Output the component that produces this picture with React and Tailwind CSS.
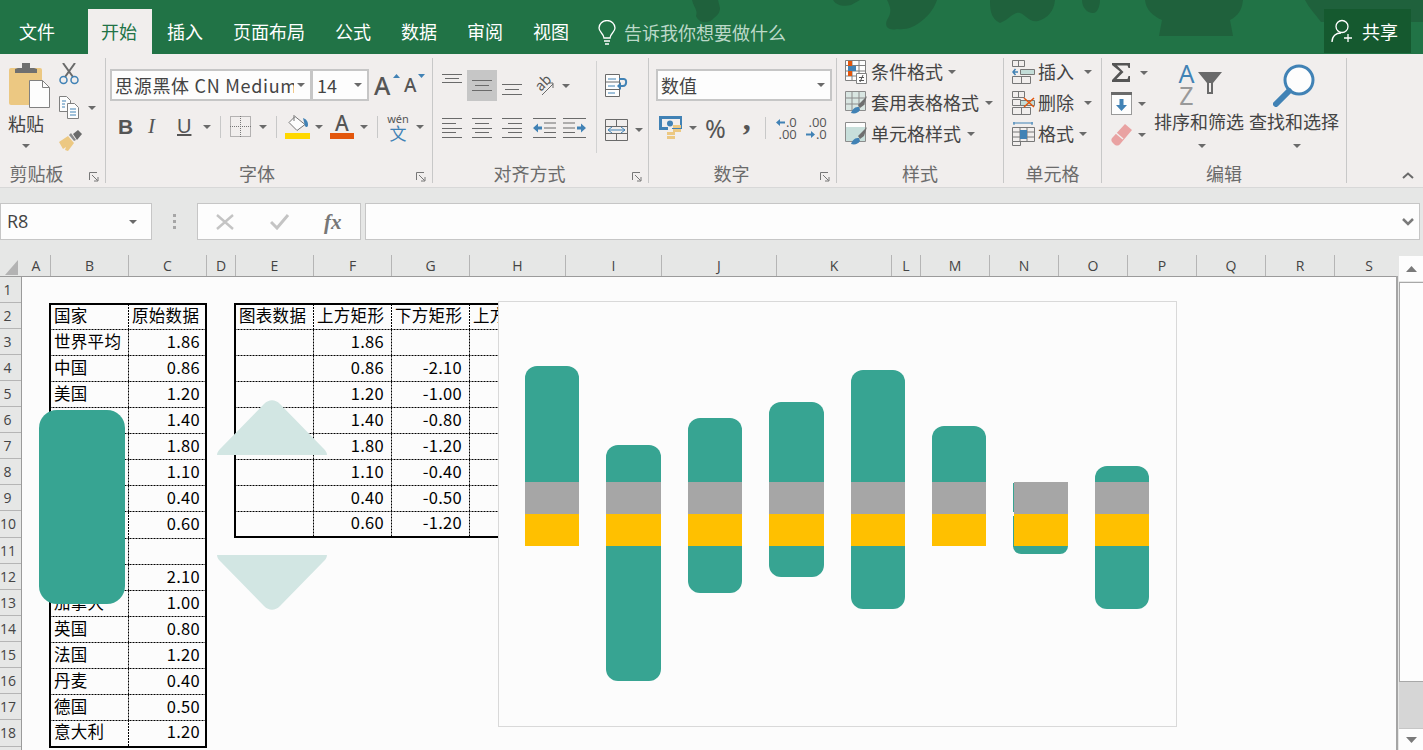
const ICON = '#6a6a6a';
const BLUE = '#4182b5';
const ORANGE = '#e3560c';
const TAN = '#ecc882';

function Caret({ className = '' }) {
  return (
    <svg className={`shrink-0 ${className}`} width="8" height="4" viewBox="0 0 8 4">
      <path d="M0 0h8L4 4z" fill={ICON} />
    </svg>
  );
}

function Launcher() {
  return (
    <svg className="absolute right-[6px] top-[114px]" width="10" height="10" viewBox="0 0 10 10" fill="none" stroke="#777">
      <path d="M.5 8V.5H8" />
      <path d="M3 3l5.5 5.5M9 5v4H5" />
    </svg>
  );
}

function Lines({ rows, width = 20, height = 20 }) {
  return (
    <svg className="shrink-0" width={width} height={height} viewBox={`0 0 ${width} ${height}`} stroke={ICON}>
      {rows.map(([a, b, y]) => (
        <path key={`${a}-${y}`} d={`M${a} ${y + 0.5}H${b}`} />
      ))}
    </svg>
  );
}

function Group({ className, label, labelClass = '', launcher, children }) {
  return (
    <div className={`relative shrink-0 h-[125px] border-r border-[#c8c8c8] ${className}`}>
      <div className="h-[104px]">{children}</div>
      <div className={`h-[21px] text-center text-[18px] leading-[22px] text-[#6b6b6b] ${labelClass}`}>{label}</div>
      {launcher && <Launcher />}
    </div>
  );
}

function Combo({ className, text, textClass = '' }) {
  return (
    <div className={`flex items-center h-[32px] bg-[#fdfdfd] border-2 border-[#c6c6c6] overflow-hidden ${className}`}>
      <span className={`flex-1 whitespace-nowrap overflow-hidden text-[18px] text-[#444] ${textClass}`}>{text}</span>
      <Caret className="mr-[4px]" />
    </div>
  );
}

function PasteIcon() {
  return (
    <svg width="44" height="46" viewBox="0 0 44 46">
      <rect x="1" y="5" width="33" height="37" rx="2" fill={TAN} />
      <path d="M7 10V6l3-1h4V0h8v5h4l3 1v4z" fill="#6f6f6f" />
      <path d="M21.5 17.5h13l7 7v20h-20z" fill="#fdfdfd" stroke="#808080" />
      <path d="M34.5 17.5v7h7" fill="none" stroke="#808080" />
    </svg>
  );
}

function CutIcon() {
  return (
    <svg width="20" height="22" viewBox="0 0 20 22" fill="none">
      <path d="M4 0l10 14M16 0L6 14" stroke={ICON} strokeWidth="2" />
      <circle cx="4.5" cy="17" r="3.5" stroke={BLUE} strokeWidth="1.5" />
      <circle cx="15.5" cy="17" r="3.5" stroke={BLUE} strokeWidth="1.5" />
    </svg>
  );
}

function CopyIcon() {
  return (
    <svg width="21" height="23" viewBox="0 0 21 23" fill="#fdfdfd" stroke="#808080">
      <path d="M.5.5h7l4 4v11H.5z" />
      <path d="M8.5 7.5h7l4 4v11h-11z" />
      <path d="M3 5h4M3 8h3M3 11h3" stroke={BLUE} />
      <path d="M11 13h6M11 16h6M11 19h6" stroke={BLUE} />
    </svg>
  );
}

function PainterIcon() {
  return (
    <svg width="24" height="21" viewBox="0 0 24 21">
      <path d="M0 12l9-6 6 7-6 8-3-1 1-3-3 2z" fill={TAN} />
      <path d="M10 5l5 6 2-1-5-7z" fill="#8a8a8a" />
      <path d="M14 4l5-4 4 4-5 6z" fill={ICON} />
    </svg>
  );
}

function BorderIcon() {
  return (
    <svg width="21" height="21" viewBox="0 0 21 21" fill="none" stroke="#777" strokeDasharray="1 1">
      <path d="M.5.5h20v20H.5zM10.5 0v21M0 10.5h21" />
    </svg>
  );
}

function BucketIcon() {
  return (
    <svg width="24" height="17" viewBox="0 0 24 17">
      <path d="M9 1.5l10 8-8 6-8-8z" fill="#fdfdfd" stroke="#777" />
      <path d="M8 0v6" stroke="#777" />
      <path d="M17 3c3 1 5 3 5 7 0 2-2 3-3 1z" fill={BLUE} />
    </svg>
  );
}

function OrientIcon() {
  return (
    <div className="relative w-[20px] h-[20px] shrink-0">
      <span className="absolute left-[-1px] top-[-2px] -rotate-45 text-[14px] leading-[16px] text-[#555]">ab</span>
      <svg className="absolute left-0 top-0" width="20" height="20" viewBox="0 0 20 20" fill="none" stroke={ICON}>
        <path d="M7 19L18 8M13 7h5v5" />
      </svg>
    </div>
  );
}

function IndentIcon({ flip }) {
  return (
    <svg className={flip ? '-scale-x-100 shrink-0' : 'shrink-0'} width="23" height="20" viewBox="0 0 23 20">
      <path d="M0 .5h23M11 5h12M11 10h12M11 14.5h12M0 19.5h23" stroke={ICON} />
      <path d="M0 10l5-4.500v3h4v3H5v3z" fill={BLUE} />
    </svg>
  );
}

function WrapIcon() {
  return (
    <svg width="23" height="24" viewBox="0 0 23 24" fill="none">
      <path d="M.5.5h14v22H.5zM.5 8h14M.5 15.500h14" stroke={ICON} fill="#fdfdfd" />
      <path d="M3 12h7M3 19h7M3 5h8" stroke={BLUE} />
      <path d="M14 5h5c3 0 3 7-1 7h-5" stroke={BLUE} strokeWidth="2" />
      <path d="M16 8l-4 4 4 4z" fill={BLUE} />
    </svg>
  );
}

function MergeIcon() {
  return (
    <svg width="23" height="22" viewBox="0 0 23 22" fill="none">
      <path d="M.5.5h22v21H.5zM.5 7.500h22M.5 14.500h22M11.500 0v7M11.500 15v7" stroke={ICON} />
      <path d="M3 11h17" stroke={BLUE} />
      <path d="M7 8l-4 3 4 3M16 8l4 3-4 3" stroke={BLUE} />
    </svg>
  );
}

function MoneyIcon() {
  return (
    <svg width="23" height="24" viewBox="0 0 23 24">
      <path d="M0 0h23v13H13v-1h8V3H3v8h6v3H0z" fill={BLUE} />
      <circle cx="11" cy="7.500" r="3" fill={BLUE} />
      <rect x="14" y="9" width="8" height="3" fill={TAN} />
      <rect x="14" y="13" width="8" height="3" fill={TAN} />
      <rect x="8" y="16" width="8" height="3" fill={TAN} />
      <rect x="8" y="20" width="8" height="3" fill={TAN} />
    </svg>
  );
}

function DecimalIcon({ top, bottom, arrowTop }) {
  const arrow = (
    <svg className={arrowTop ? 'mr-[1px]' : 'mr-[1px] -scale-x-100'} width="9" height="9" viewBox="0 0 9 9">
      <path d="M0 4.500L4 1v2.500h5v2H4V8z" fill={BLUE} />
    </svg>
  );
  return (
    <div className="flex flex-col items-end w-[24px] text-[13px] leading-[12px] text-[#555] font-['Open_Sans',sans-serif]">
      <div className="flex items-center h-[12px]">{arrowTop && arrow}{top}</div>
      <div className="flex items-center h-[12px]">{!arrowTop && arrow}{bottom}</div>
    </div>
  );
}

function CondIcon() {
  return (
    <svg width="22" height="24" viewBox="0 0 22 24" fill="#fdfdfd" stroke="#808080">
      <path d="M.5.5h20v20H.5z" />
      <path d="M7 0v21M14 0v21M0 5.500h21M0 11h21M0 16h21" />
      <rect x="3" y="1" width="4" height="5" fill={ORANGE} stroke="none" />
      <rect x="3" y="6" width="8" height="5" fill={BLUE} stroke="none" />
      <rect x="3" y="11" width="4" height="5" fill={ORANGE} stroke="none" />
      <path d="M11.500 13.500h10v10h-10z" />
      <path d="M14 17.500h5M14 20.500h5M18 15l-3 7" stroke="#555" />
    </svg>
  );
}

function TableIcon({ fill, plain }) {
  return (
    <svg width="23" height="24" viewBox="0 0 23 24" fill="none" stroke="#8c8c8c">
      <path d="M.5.5h20v19H.5z" fill="#fdfdfd" />
      <rect x="1" y={plain ? 5 : 1} width="19" height={plain ? 14 : 18} fill={fill} stroke="none" />
      {plain ? null : <path d="M7 1v18M14 1v18M1 7h19M1 13h19" />}
      <path d="M13 14l9-9-3 9-4 3z" fill="#6f6f6f" stroke="none" />
      <path d="M6 22c2-5 4-6 8-6l1 3c-2 3-5 4-9 3z" fill={BLUE} stroke="none" />
    </svg>
  );
}

function CellsIcon({ type }) {
  return (
    <svg width="23" height="24" viewBox="0 0 23 24" fill="none" stroke="#777">
      {type === 'format' ? (
        <>
          <path d="M1 1h20M2 0v3M20 0v3" stroke={BLUE} />
          <path d="M.5 5.500h22v14H.5zM.500 10h22M.500 15h22M8 5v15M15 5v15" />
          <rect x="8" y="8" width="7" height="9" fill={BLUE} stroke="none" />
          <path d="M.5 19.500v4h8v-4" />
        </>
      ) : (
        <>
          <path d="M.5.5h12v6H.5zM.500 16.500h18v7H.500zM9.500 16v8M6.500 0v7" />
          <path d="M8.500 9.500h14v5h-14z" fill="#c3ddd8" />
          {type === 'insert' ? (
            <path d="M1 12h5M3.500 9L1 12l2.500 3" stroke={BLUE} strokeWidth="1.500" />
          ) : (
            <>
              <path d="M.5 8.500h8v6h-8z" />
              <path d="M12 7l10 9M22 7l-10 9" stroke={ORANGE} strokeWidth="1.500" />
            </>
          )}
        </>
      )}
    </svg>
  );
}

function StyleRow({ icon, text, caretClass }) {
  return (
    <div className="flex items-center h-[28px] pl-[8px] text-[18px] text-[#444] whitespace-nowrap">
      <div className="w-[23px] shrink-0">{icon}</div>
      <span className="ml-[3px] leading-[24px] -mt-[2px]">{text}</span>
      <Caret className={caretClass} />
    </div>
  );
}

function SumIcon() {
  return (
    <svg width="19" height="19" viewBox="0 0 19 19">
      <path d="M0 0h18v5h-1.500l-1-2.500H5l6.500 6.500L4.500 16h11l1-3H18v6H0v-2l8-8.500L0 2z" fill="#555" />
    </svg>
  );
}

function FillDownIcon() {
  return (
    <svg width="21" height="23" viewBox="0 0 21 23">
      <rect x=".5" y=".5" width="20" height="22" fill="#fdfdfd" stroke="#999" />
      <rect width="21" height="3" fill={ICON} />
      <path d="M8.500 7h4v6H16l-5.500 6L5 13h3.500z" fill={BLUE} />
    </svg>
  );
}

function EraserIcon() {
  return (
    <svg width="21" height="22" viewBox="0 0 21 22">
      <path d="M14 0l7 6-11 13c-2 3-4 3-6 2l-3-3c-1-2-1-3 1-5z" fill="#e9a2a2" />
      <path d="M5 9l7 6" stroke="#f1eeed" strokeWidth="1.500" />
    </svg>
  );
}

function SortIcon() {
  return (
    <div className="flex items-start h-[47px] font-['Noto_Sans',sans-serif]">
      <div className="flex flex-col items-center w-[20px] text-[25px] leading-[22px]">
        <span className="text-[#4182b5]">A</span>
        <span className="text-[#999]">Z</span>
      </div>
      <svg className="mt-[10px] ml-[1px]" width="24" height="22" viewBox="0 0 24 22" fill={ICON}>
        <path d="M0 0h24L15 11v11H9V11z" />
        <path d="M11 11v9h2v-9" fill="#f1eeed" />
      </svg>
    </div>
  );
}

function FindIcon() {
  return (
    <svg width="42" height="43" viewBox="0 0 42 43" fill="none">
      <circle cx="26" cy="16" r="14" fill="#fdfdfd" stroke={BLUE} strokeWidth="3" />
      <path d="M3 40l13-13" stroke={BLUE} strokeWidth="6" strokeLinecap="round" />
    </svg>
  );
}

function HeaderBlobs() {
  return (
    <svg className="absolute left-0 top-0" width="1423" height="54" viewBox="0 0 1423 54" fill="#1f613c">
      <path d="M692 0c2 8 6 10 4 16 2 6 10 8 16 4 4-4 8-6 8-12l-2-8z" />
      <path d="M833 0c3 5 10 7 18 5l9-5z" />
      <path d="M887 0c4 8 5 12 0 20-3 7 2 11 10 9 10 1 16-2 22-6 8-6 14-12 18-23z" />
      <path d="M990 0c0 8 0 18 10 23 10-4 14-12 20-10 6 2 10 10 18 8 10-3 16-10 17-21z" />
      <path d="M1082 0c0 8 6 14 12 13 4-1 6-8 6-13z" />
      <path d="M1145 0c1 10 8 16 17 20l-3 16h74l-3-16c8-4 12-10 13-20z" />
      <path d="M1305 0c4 8 10 14 16 22h102V0z" />
    </svg>
  );
}

function Ribbon() {
  return (
    <div className="relative flex h-[134px] pt-[4px] bg-[#f1eeed] border-b border-[#d8d8d8] text-[#444]">
      <Group className="w-[106px]" label="剪贴板" labelClass="pr-[32px]" launcher>
        <div className="flex h-full">
          <div className="flex flex-col items-start w-[52px] pt-[5px]">
            <div className="ml-[8px]"><PasteIcon /></div>
            <span className="ml-[8px] text-[18px] leading-[24px] mt-[2px]">粘贴</span>
            <Caret className="ml-[22px] mt-[9px]" />
          </div>
          <div className="flex flex-col pl-[7px] pt-[5px]">
            <CutIcon />
            <div className="flex items-center mt-[11px]">
              <CopyIcon />
              <Caret className="ml-[8px]" />
            </div>
            <div className="mt-[11px]"><PainterIcon /></div>
          </div>
        </div>
      </Group>

      <Group className="w-[327px]" label="字体" labelClass="pr-[24px]" launcher>
        <div className="flex items-center pl-[4px] pt-[11px]">
          <Combo className="w-[202px] pl-[3px] pr-[1px]" text="思源黑体 CN Medium" textClass="tracking-[0.7px] mr-[3px]" />
          <Combo className="w-[58px] -ml-[1px] pl-[4px] pr-[1px]" text="14" />
          <div className="relative w-[30px] ml-[5px] text-[25px] leading-[32px] font-medium text-[#555] font-['Noto_Sans',sans-serif]">
            A
            <svg className="absolute left-[19px] top-[5px]" width="7" height="4" viewBox="0 0 7 4"><path d="M0 4h7L3.500 0z" fill={BLUE} /></svg>
          </div>
          <div className="relative w-[26px] text-[19px] leading-[32px] font-medium text-[#555] font-['Noto_Sans',sans-serif]">
            A
            <svg className="absolute left-[14px] top-[5px]" width="7" height="4" viewBox="0 0 7 4"><path d="M0 0h7L3.500 4z" fill={BLUE} /></svg>
          </div>
        </div>
        <div className="flex items-center h-[27px] mt-[12px] text-[#555]">
          <span className="ml-[12px] w-[14px] text-[21px] font-bold leading-[27px] font-['Liberation_Sans',sans-serif]">B</span>
          <span className="ml-[16px] w-[14px] text-[21px] italic leading-[27px] font-['Liberation_Serif',serif]">I</span>
          <span className="ml-[15px] w-[15px] text-[20px] font-medium underline leading-[27px] font-['Liberation_Sans',sans-serif]">U</span>
          <Caret className="ml-[11px]" />
          <div className="ml-[9px] w-px h-[22px] bg-[#c8c8c8]" />
          <div className="ml-[9px]"><BorderIcon /></div>
          <Caret className="ml-[8px]" />
          <div className="ml-[9px] w-px h-[22px] bg-[#c8c8c8]" />
          <div className="ml-[8px] flex flex-col items-center w-[25px]">
            <BucketIcon />
            <div className="w-[25px] h-[6px] mt-[1px] bg-[#ffd800]" />
          </div>
          <Caret className="ml-[5px]" />
          <div className="ml-[7px] flex flex-col items-center w-[24px]">
            <span className="text-[21px] leading-[19px] font-medium font-['Noto_Sans',sans-serif]">A</span>
            <div className="w-[24px] h-[6px] bg-[#e3560c]" />
          </div>
          <Caret className="ml-[6px]" />
          <div className="ml-[9px] w-px h-[22px] bg-[#c8c8c8]" />
          <div className="ml-[10px] flex flex-col items-center w-[20px]">
            <span className="text-[11px] leading-[11px] font-['Noto_Sans',sans-serif]">wén</span>
            <span className="text-[17px] leading-[17px] text-[#4182b5]">文</span>
          </div>
          <Caret className="ml-[8px]" />
        </div>
      </Group>

      <Group className="w-[216px]" label="对齐方式" labelClass="pr-[22px]" launcher>
        <div className="flex h-full">
          <div className="w-[163px]">
            <div className="flex items-center h-[31px] mt-[12px]">
              <div className="ml-[9px] h-[20px] self-start mt-[4px]">
                <Lines rows={[[0, 20, 0], [3, 17, 4], [0, 20, 8]]} />
              </div>
              <div className="ml-[5px] flex items-center justify-center w-[30px] h-[31px] bg-[#c6c6c6]">
                <Lines width={20} height={12} rows={[[0, 20, 0], [3, 17, 5], [0, 20, 10]]} />
              </div>
              <div className="ml-[5px] h-[12px] self-end mb-[5px]">
                <Lines width={20} height={12} rows={[[0, 20, 0], [3, 17, 5], [0, 20, 10]]} />
              </div>
              <div className="ml-[13px]"><OrientIcon /></div>
              <Caret className="ml-[7px]" />
            </div>
            <div className="flex items-center mt-[17px]">
              <div className="ml-[9px]"><Lines rows={[[0, 20, 0], [0, 14, 5], [0, 20, 10], [0, 14, 14], [0, 20, 19]]} /></div>
              <div className="ml-[10px]"><Lines rows={[[0, 20, 0], [3, 17, 5], [0, 20, 10], [3, 17, 14], [0, 20, 19]]} /></div>
              <div className="ml-[10px]"><Lines rows={[[0, 20, 0], [6, 20, 5], [0, 20, 10], [6, 20, 14], [0, 20, 19]]} /></div>
              <div className="ml-[11px]"><IndentIcon /></div>
              <div className="ml-[7px]"><IndentIcon flip /></div>
            </div>
          </div>
          <div className="w-px h-[92px] mt-[3px] bg-[#d2d2d2]" />
          <div className="pl-[8px] pt-[16px]">
            <WrapIcon />
            <div className="flex items-center mt-[21px]">
              <MergeIcon />
              <Caret className="ml-[7px]" />
            </div>
          </div>
        </div>
      </Group>

      <Group className="w-[188px]" label="数字" labelClass="pr-[22px]" launcher>
        <div className="pl-[7px] pt-[11px]">
          <Combo className="w-[176px] pl-[3px] pr-[1px]" text="数值" />
        </div>
        <div className="flex items-center h-[24px] mt-[15px]">
          <div className="ml-[10px]"><MoneyIcon /></div>
          <Caret className="ml-[7px]" />
          <span className="ml-[8px] text-[25px] leading-[24px] text-[#555] font-['Noto_Sans',sans-serif]">%</span>
          <span className="ml-[17px] w-[10px] text-[32px] leading-[24px] font-bold text-[#555] -mt-[18px] font-['Liberation_Serif',serif]">,</span>
          <div className="ml-[12px] w-px h-[22px] bg-[#c8c8c8]" />
          <div className="ml-[7px]"><DecimalIcon top=".0" bottom=".00" arrowTop /></div>
          <div className="ml-[6px]"><DecimalIcon top=".00" bottom=".0" /></div>
        </div>
      </Group>

      <Group className="w-[167px]" label="样式">
        <div className="flex flex-col gap-[3px]">
          <StyleRow icon={<CondIcon />} text="条件格式" caretClass="ml-[5px]" />
          <StyleRow icon={<TableIcon fill="#d9e6e2" />} text="套用表格格式" caretClass="ml-[6px]" />
          <StyleRow icon={<TableIcon fill="#c8dfdb" plain />} text="单元格样式" caretClass="ml-[6px]" />
        </div>
      </Group>

      <Group className="w-[98px]" label="单元格">
        <div className="flex flex-col gap-[3px]">
          <StyleRow icon={<CellsIcon type="insert" />} text="插入" caretClass="ml-[10px]" />
          <StyleRow icon={<CellsIcon type="delete" />} text="删除" caretClass="ml-[10px]" />
          <StyleRow icon={<CellsIcon type="format" />} text="格式" caretClass="ml-[5px]" />
        </div>
      </Group>

      <Group className="w-[245px]" label="编辑">
        <div className="flex h-full text-[18px]">
          <div className="flex flex-col w-[52px] pl-[9px] pt-[5px]">
            <div className="flex items-center h-[19px]">
              <div className="ml-[1px]"><SumIcon /></div>
              <Caret className="ml-[9px]" />
            </div>
            <div className="flex items-center mt-[10px]">
              <FillDownIcon />
              <Caret className="ml-[6px]" />
            </div>
            <div className="flex items-center mt-[9px]">
              <EraserIcon />
              <Caret className="ml-[6px]" />
            </div>
          </div>
          <div className="flex flex-col items-center w-[90px] pt-[4px] whitespace-nowrap">
            <SortIcon />
            <span className="leading-[24px]">排序和筛选</span>
            <Caret className="mt-[11px] ml-[6px]" />
          </div>
          <div className="flex flex-col items-center w-[90px] ml-[5px] pt-[4px] whitespace-nowrap">
            <div className="h-[47px] pt-[2px]"><FindIcon /></div>
            <span className="leading-[24px]">查找和选择</span>
            <Caret className="mt-[11px] ml-[6px]" />
          </div>
        </div>
      </Group>

      <svg className="absolute right-[9px] bottom-[8px]" width="12" height="7" viewBox="0 0 12 7" fill="none">
        <path d="M1 6l5-4.500L11 6" stroke={ICON} strokeWidth="2" />
      </svg>
    </div>
  );
}

function TitleBar() {
  const tabs = ['插入', '页面布局', '公式', '数据', '审阅', '视图'];
  return (
    <div className="relative flex items-end h-[54px] bg-[#217346] text-white text-[18px]">
      <HeaderBlobs />
      <div className="relative flex items-end h-[45px] pl-[19px]">
        <span className="leading-[46px] w-[69px]">文件</span>
        <span className="h-[45px] w-[64px] pr-[2px] text-center leading-[44px] bg-[#f1eeed] text-[#217346]">开始</span>
        {tabs.map((t) => (
          <span key={t} className="px-[15px] leading-[46px]">{t}</span>
        ))}
        <svg className="ml-[14px] mb-[8px]" width="18" height="26" viewBox="0 0 18 26" fill="none" stroke="#fff" strokeWidth="1.300">
          <path d="M6 18c0-4-5-6-5-10a8 7.500 0 0 1 16 0c0 4-5 6-5 10z" />
          <path d="M6 21h6M7 24h4" strokeWidth="1.500" />
        </svg>
        <span className="ml-[8px] leading-[44px] text-[#bcd9c9]">告诉我你想要做什么</span>
      </div>
      <div className="relative ml-auto mr-[12px] mb-[1px] flex items-center w-[87px] h-[44px] pl-[7px] bg-[#15592f]">
        <svg width="24" height="24" viewBox="0 0 24 24" fill="none" stroke="#fff" strokeWidth="1.300">
          <circle cx="11" cy="7.500" r="6" />
          <path d="M1 23c0-6 4-9 9-9M17 15v8M13 19h8" />
        </svg>
        <span className="ml-[7px]">共享</span>
      </div>
    </div>
  );
}

function FormulaBar() {
  return (
    <div className="flex h-[67px] pt-[15px] bg-[#e6e7e6]">
      <div className="flex items-center w-[152px] h-[37px] pl-[6px] pr-[14px] bg-[#fdfdfd] border border-[#c6c6c6]">
        <span className="flex-1 text-[18px] text-[#444] font-['Open_Sans',sans-serif]">R8</span>
        <Caret />
      </div>
      <div className="flex flex-col items-center justify-center gap-[3px] w-[45px] h-[37px]">
        <i className="w-[3px] h-[3px] bg-[#a6a6a6]" />
        <i className="w-[3px] h-[3px] bg-[#a6a6a6]" />
        <i className="w-[3px] h-[3px] bg-[#a6a6a6]" />
      </div>
      <div className="flex items-center w-[164px] h-[37px] bg-[#fdfdfd] border border-[#c6c6c6]">
        <svg className="ml-[18px]" width="18" height="16" viewBox="0 0 18 16" fill="none" stroke="#c4c4c4" strokeWidth="2.400">
          <path d="M1 1l16 14M17 1L1 15" />
        </svg>
        <svg className="ml-[36px]" width="20" height="16" viewBox="0 0 20 16" fill="none" stroke="#c4c4c4" strokeWidth="3">
          <path d="M1 8l6 6L18 1" />
        </svg>
        <span className="ml-[34px] text-[21px] italic font-bold leading-[24px] text-[#777] font-['Liberation_Serif',serif]">fx</span>
      </div>
      <div className="flex items-center justify-end flex-1 h-[37px] ml-[4px] mr-[3px] pr-[5px] bg-[#fdfdfd] border border-[#c6c6c6]">
        <svg width="12" height="8" viewBox="0 0 12 8" fill="none">
          <path d="M1 1l5 5 5-5" stroke="#7a7a7a" strokeWidth="2.500" />
        </svg>
      </div>
    </div>
  );
}

const columns = [
  ['A', 'w-[29px]'], ['B', 'w-[78px]'], ['C', 'w-[78px]'], ['D', 'w-[29px]'], ['E', 'w-[78px]'],
  ['F', 'w-[78px]'], ['G', 'w-[78px]'], ['H', 'w-[96px]'], ['I', 'w-[96px]'], ['J', 'w-[115px]'],
  ['K', 'w-[115px]'], ['L', 'w-[29px]'], ['M', 'w-[69px]'], ['N', 'w-[69px]'], ['O', 'w-[69px]'],
  ['P', 'w-[69px]'], ['Q', 'w-[69px]'], ['R', 'w-[69px]'], ['S', 'w-[69px]'],
];

const rowNums = Array.from({ length: 18 }, (_, i) => i + 1);

const sourceRows = [
  ['国家', '原始数据'], ['世界平均', '1.86'], ['中国', '0.86'], ['美国', '1.20'], ['', '1.40'], ['', '1.80'],
  ['', '1.10'], ['', '0.40'], ['', '0.60'], ['', ''], ['', '2.10'], ['加拿大', '1.00'], ['英国', '0.80'],
  ['法国', '1.20'], ['丹麦', '0.40'], ['德国', '0.50'], ['意大利', '1.20'],
];

const chartRows = [
  ['图表数据', '上方矩形', '下方矩形', '上方矩形'], ['', '1.86', '', ''], ['', '0.86', '-2.10', ''],
  ['', '1.20', '-1.00', ''], ['', '1.40', '-0.80', ''], ['', '1.80', '-1.20', ''], ['', '1.10', '-0.40', ''],
  ['', '0.40', '-0.50', ''], ['', '0.60', '-1.20', ''],
];

// dash pattern of the sheet's hair borders, 2 on 1 off like Excel draws them
const DASH_BOTH = "[background:linear-gradient(90deg,#000_2px,transparent_2px)_bottom/3px_1px_repeat-x,linear-gradient(#000_2px,transparent_2px)_right/1px_3px_repeat-y]";
const DASH_RIGHT = "[background:linear-gradient(#000_2px,transparent_2px)_right/1px_3px_repeat-y]";
const DASH_BOTTOM = "[background:linear-gradient(90deg,#000_2px,transparent_2px)_bottom/3px_1px_repeat-x]";

function dashClass(right, bottom) {
  if (right && bottom) return DASH_BOTH;
  if (right) return DASH_RIGHT;
  if (bottom) return DASH_BOTTOM;
  return '';
}

// heights of the rows inside the frames, the frame border eats into first and last
function innerRowClass(i, last, lastClass) {
  if (i === 0) return 'h-[25px]';
  if (i === last) return lastClass;
  if (i === 8) return 'h-[27px]';
  return 'h-[26px]';
}

function DataTable({ rows, widths, lastClass, numPad }) {
  const last = rows.length - 1;
  return (
    <div className="shrink-0 border-2 border-black text-[16.5px] tracking-[0.3px] text-black">
      {rows.map((row, i) => (
        <div key={i} className={`flex ${innerRowClass(i, last, lastClass)}`}>
          {row.map((val, j) => {
            const isNum = /^-?\d/.test(val);
            return (
              <div
                key={j}
                className={`flex items-center shrink-0 pb-[4px] overflow-hidden whitespace-nowrap ${widths[j]} ${dashClass(j < row.length - 1, i < last)} ${isNum ? `justify-end ${numPad[j]}` : 'pl-[3px]'}`}
              >
                {val}
              </div>
            );
          })}
        </div>
      ))}
    </div>
  );
}

const bars = [
  { top: 116, bottom: 0 }, { top: 37, bottom: 135 }, { top: 64, bottom: 47 }, { top: 80, bottom: 31 },
  { top: 112, bottom: 63 }, { top: 56, bottom: 0 }, { top: 0, bottom: 8, sliver: true }, { top: 16, bottom: 63 },
];

function Chart() {
  return (
    <div className="absolute left-[498px] top-[46px] w-[679px] h-[426px] bg-[#fcfcfc] border border-[#d9d9d9]">
      <div className="flex items-start gap-[27.13px] pl-[26px]">
        {bars.map((bar, i) => (
          <div key={i} className="relative flex flex-col justify-start shrink-0 w-[54.3px] h-[424px] pt-[180px]">
            {bar.top > 0 && (
              <div className="absolute left-0 right-0 rounded-t-[12px] bg-[#37a492] bottom-[244px]" style={{ height: bar.top }} />
            )}
            <div className="h-[32px] bg-[#a6a6a6]" />
            <div className="h-[32px] bg-[#ffc000]" />
            {bar.bottom > 0 && (
              <div className={`bg-[#37a492] ${bar.bottom < 12 ? 'rounded-b-[8px] -ml-px' : 'rounded-b-[12px]'}`} style={{ height: bar.bottom }} />
            )}
            {bar.sliver && (
              <>
                <div className="absolute -left-px top-[181px] w-px h-[29px] bg-[#37a492]" />
                <div className="absolute -left-px top-[214px] w-px h-[31px] bg-[#37a492]" />
              </>
            )}
          </div>
        ))}
      </div>
    </div>
  );
}

function Triangle({ className }) {
  return (
    <svg className={`absolute left-[217px] ${className}`} width="110" height="55" viewBox="0 0 110 55">
      <path d="M0 55C0 52 2 50 4 48L47 4C52-1 58-1 63 4L106 48C108 50 110 52 110 55Z" fill="#d2e6e3" />
    </svg>
  );
}

function Sheet() {
  return (
    <div className="relative w-[1396px] h-full shrink-0 overflow-hidden bg-[#fcfcfc]">
      <div className="flex h-[22px] bg-[#e6e7e6] border-b border-[#9b9b9b] text-[14px] text-[#444] font-['Open_Sans',sans-serif]">
        <div className="w-[22px] shrink-0 pl-[5px] pt-[5px]">
          <svg width="13" height="15" viewBox="0 0 13 15"><path d="M13 0v15H0z" fill="#b3b3b3" /></svg>
        </div>
        {columns.map(([name, w]) => (
          <div key={name} className={`${w} shrink-0 text-center leading-[21px] border-r border-[#b5b5b5]`}>{name}</div>
        ))}
      </div>
      <div className="flex h-full">
        <div className="w-[22px] shrink-0 bg-[#e6e7e6] border-r border-[#9b9b9b] text-[14px] text-[#444] font-['Open_Sans',sans-serif]">
          {rowNums.map((n) => (
            <div key={n} className={`w-full border-b border-[#b5b5b5] ${n === 10 || n === 18 ? 'h-[27px]' : 'h-[26px]'}`}>
              <span className="block w-[15px] text-center leading-[26px] whitespace-nowrap">{n}</span>
            </div>
          ))}
        </div>
        <div className="flex items-start gap-[27px] pl-[27px] pt-[26px]">
          <DataTable
            rows={sourceRows}
            widths={['w-[78px]', 'w-[76px]']}
            lastClass="h-[25px]"
            numPad={['', 'pr-[5px]']}
          />
          <DataTable
            rows={chartRows}
            widths={['w-[78px]', 'w-[78px]', 'w-[78px]', 'w-[96px]']}
            lastClass="h-[24px]"
            numPad={['', 'pr-[8px]', 'pr-[8px]', 'pr-[8px]']}
          />
        </div>
      </div>
      <Chart />
      <div className="absolute left-[39px] top-[155px] w-[86px] h-[194px] rounded-[18px] bg-[#37a492]" />
      <Triangle className="top-[145px]" />
      <Triangle className="top-[300px] rotate-180" />
    </div>
  );
}

function ScrollBar() {
  return (
    <div className="flex flex-1 h-full bg-[#e6e7e6]">
      <div className="w-[2px] mt-[21px] bg-[#a5a5a5]" />
      <div className="flex flex-col flex-1 ml-px">
        <div className="flex items-center justify-center h-[25px] mt-px bg-[#fdfdfd]">
          <svg width="11" height="6" viewBox="0 0 11 6"><path d="M0 6h11L5.500 0z" fill="#7a7a7a" /></svg>
        </div>
        <div className="h-[400px] mt-px bg-[#fdfdfd] border-l border-y border-[#a8a8a8]" />
        <div className="h-[46px] bg-[#d6d6d6]" />
        <div className="flex items-center justify-center flex-1 bg-[#fdfdfd] border-t border-[#c6c6c6]">
          <svg width="11" height="6" viewBox="0 0 11 6"><path d="M0 0h11L5.500 6z" fill="#7a7a7a" /></svg>
        </div>
      </div>
    </div>
  );
}

export default function App() {
  return (
    <div className="flex flex-col w-full h-screen overflow-hidden bg-[#e6e7e6] font-['Noto_Sans_CJK_SC','Noto_Sans',sans-serif]">
      <TitleBar />
      <Ribbon />
      <FormulaBar />
      <div className="flex flex-1 min-h-0">
        <Sheet />
        <ScrollBar />
      </div>
    </div>
  );
}
